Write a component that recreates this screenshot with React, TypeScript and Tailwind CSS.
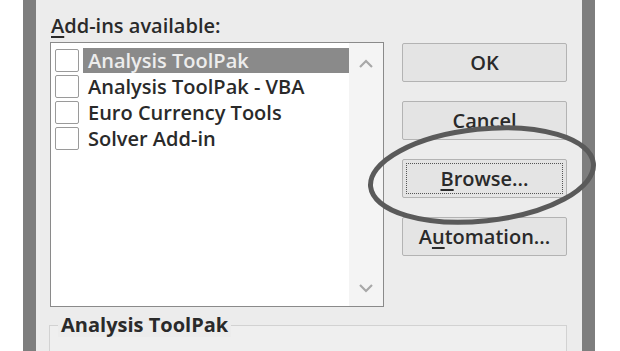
/**
 * Add-ins dialog (grayscale print scan) with the Browse button circled
 */

const addins = ['Analysis ToolPak', 'Analysis ToolPak - VBA', 'Euro Currency Tools', 'Solver Add-in'];

function Checkbox() {
  return <div className="w-[24px] h-[23px] shrink-0 bg-white border border-[#9a9a9a] rounded-[2px]" />;
}

function Chevron({ up }: { up?: boolean }) {
  return (
    <svg width="16" height="10" viewBox="0 0 16 10" fill="none" stroke="#a8a8a8" strokeWidth={2.2}>
      <path d={up ? 'M2 8l6-6 6 6' : 'M2 2l6 6 6-6'} />
    </svg>
  );
}

function DlgButton({ children, focused }: { children: React.ReactNode; focused?: boolean }) {
  return (
    <div className="h-[39px] w-full bg-[#e4e4e4] border border-[#b3b3b3] rounded-[2px] p-[3px]">
      <div
        className={`h-full w-full flex items-center justify-center text-[20px] font-semibold leading-none text-[#2a2a2a] ${
          focused ? 'border border-dotted border-[#555]' : ''
        }`}
      >
        {children}
      </div>
    </div>
  );
}

export default function App() {
  return (
    <div
      className="relative w-[620px] h-[351px] overflow-hidden bg-white pl-[23px]"
      style={{ fontFamily: '"Open Sans", "Noto Sans", sans-serif' }}
    >
      {/* 对话框 */}
      <div className="h-full w-[572px] bg-[#ececec] border-x-[13px] border-[#7e7e7e] pt-[13px] pl-[14px] pr-[15px]">
        <div className="h-[26px] pl-[1px] text-[20px] font-semibold leading-[26px] text-[#2a2a2a]">
          <span className="underline underline-offset-[3px]">A</span>dd-ins available:
        </div>

        <div className="flex mt-[3px]">
          {/* 列表 */}
          <div className="w-[334px] h-[265px] bg-white border border-[#8a8a8a] flex">
            <div className="flex-1 pt-[4px] pl-[4px]">
              {addins.map((name, i) => (
                <div key={name} className="h-[26px] flex items-center gap-[4px]">
                  <Checkbox />
                  <div
                    className={`h-[25px] flex-1 pl-[5px] text-[20px] font-semibold leading-[25px] ${
                      i === 0 ? 'bg-[#8a8a8a] text-[#ededed]' : 'text-[#2a2a2a]'
                    }`}
                  >
                    {name}
                  </div>
                </div>
              ))}
            </div>
            <div className="w-[34px] bg-[#f4f4f4] flex flex-col items-center justify-between pt-[16px] pb-[13px]">
              <Chevron up />
              <Chevron />
            </div>
          </div>

          {/* 按钮 */}
          <div className="ml-[18px] w-[165px] flex flex-col gap-[19px] pt-[1px]">
            <DlgButton>OK</DlgButton>
            <DlgButton>Cancel</DlgButton>
            <DlgButton focused>
              <span className="underline underline-offset-[3px]">B</span>rowse...
            </DlgButton>
            <DlgButton>
              A<span className="underline underline-offset-[3px]">u</span>tomation...
            </DlgButton>
          </div>
        </div>

        {/* 分组框 */}
        <div className="relative mt-[18px] w-[518px] h-[40px] -ml-[1px] border border-[#d2d2d2] bg-[#efefef]">
          <div className="absolute -top-[13px] left-[8px] px-[3px] bg-[#ececec] text-[20px] leading-[24px] font-bold text-[#2a2a2a]">
            Analysis ToolPak
          </div>
        </div>
      </div>

      {/* 手绘圈 */}
      <svg className="absolute left-0 top-0 pointer-events-none" width="620" height="351">
        <ellipse
          cx="482"
          cy="175"
          rx="112"
          ry="46"
          transform="rotate(-6 482 175)"
          fill="none"
          stroke="#5a5a5a"
          strokeWidth={5}
        />
      </svg>
    </div>
  );
}
